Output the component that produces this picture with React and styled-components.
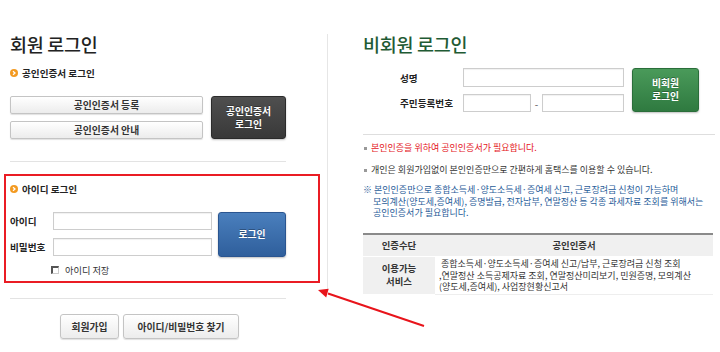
import React from 'react';
import styled, { createGlobalStyle } from 'styled-components';

const GlobalStyle = createGlobalStyle`
  html, body {
    margin: 0;
    padding: 0;
    background: #fff;
  }
  body {
    font-family: "Noto Sans CJK KR", "Noto Sans", sans-serif;
    color: #333;
  }
  * {
    box-sizing: border-box;
  }
`;

const Page = styled.div`
  position: relative;
  width: 720px;
  height: 352px;
  display: flex;
  overflow: hidden;
`;

const LeftCol = styled.div`
  width: 327px;
  padding: 33px 41px 0 10px;
`;

const VDivider = styled.div`
  width: 1px;
  height: 256px;
  margin-top: 34px;
  background: #e6e6e6;
`;

const RightCol = styled.div`
  flex: 1;
  padding: 33px 5px 0 35px;
`;

const PageTitle = styled.h1`
  margin: 0;
  height: 22px;
  font-size: 18.5px;
  line-height: 22px;
  font-weight: 500;
  letter-spacing: -0.3px;
  color: ${p => (p.$green ? '#1f5b34' : '#222')};
`;

const SectionHead = styled.div`
  display: flex;
  align-items: center;
  gap: 4px;
  height: 14px;
  margin-top: ${p => p.$mt || 0}px;
  font-size: 9.6px;
  font-weight: 700;
  color: #222;
  line-height: 14px;
`;

const Bullet = () => (
  <svg width="8" height="8" viewBox="0 0 8 8">
    <circle cx="4" cy="4" r="4" fill="#f39a21" />
    <path d="M3 2.2 L5 4 L3 5.8" stroke="#fff" strokeWidth="1.3" fill="none" />
  </svg>
);

const CertRow = styled.div`
  display: flex;
  gap: 8px;
  margin-top: 15px;
`;

const CertStack = styled.div`
  width: 193px;
  display: flex;
  flex-direction: column;
  gap: 7px;
  padding-top: 1px;
`;

const LightButton = styled.button`
  height: ${p => p.$h || 18}px;
  width: ${p => (p.$w ? `${p.$w}px` : '100%')};
  padding: 0;
  border: 1px solid #c4c4c4;
  border-radius: ${p => p.$r || 2}px;
  background: linear-gradient(#ffffff, #ececec);
  box-shadow: 0 1px 1px rgba(0, 0, 0, 0.12);
  font-family: inherit;
  font-size: 9.8px;
  font-weight: 700;
  color: #333;
  line-height: 12px;
`;

const SolidButton = styled.button`
  width: ${p => p.$w}px;
  height: ${p => p.$h}px;
  margin-top: ${p => p.$mt || 0}px;
  padding: 0;
  border: 1px solid ${p => p.$edge};
  border-radius: 3px;
  background: linear-gradient(${p => p.$top}, ${p => p.$bottom});
  box-shadow: 0 1px 2px rgba(0, 0, 0, 0.25);
  font-family: inherit;
  font-size: 9.8px;
  font-weight: 700;
  color: #fff;
  line-height: 13px;
  text-shadow: 0 -1px 0 rgba(0, 0, 0, 0.3);
`;

const HLine = styled.div`
  height: 1px;
  margin-top: ${p => p.$mt}px;
  background: ${p => p.$color || '#e3e3e3'};
`;

const IdBox = styled.div`
  margin: 12px 0 0 -6px;
  width: 316px;
  border: 2px solid #ea1c24;
  padding: 6px 0 4px 4px;
`;

const IdForm = styled.div`
  display: grid;
  grid-template-columns: 43px 159px 68px;
  grid-template-rows: 18px 18px;
  row-gap: 8px;
  margin-top: 16px;
  align-items: center;
`;

const FieldLabel = styled.label`
  font-size: 9.6px;
  font-weight: 700;
  color: #222;
  white-space: nowrap;
`;

const TextInput = styled.input`
  width: ${p => (p.$w ? `${p.$w}px` : '100%')};
  height: ${p => p.$h || 18}px;
  margin: 0;
  border: 1px solid #cdcdcd;
  box-shadow: inset 0 1px 1px rgba(0, 0, 0, 0.06);
  background: #fff;
`;

const BlueLogin = styled(SolidButton)`
  grid-column: 3;
  grid-row: 1 / span 2;
  margin-left: 6px;
  align-self: start;
`;

const SaveRow = styled.div`
  display: flex;
  align-items: center;
  gap: 6px;
  height: 14px;
  margin-top: 7px;
  padding-left: 41px;
  font-size: 9.2px;
  color: #333;
`;

const Check = styled.span`
  width: 8px;
  height: 8px;
  border-top: 2px solid #555;
  border-left: 2px solid #555;
  border-right: 1px solid #ccc;
  border-bottom: 1px solid #ccc;
  background: #fff;
`;

const BottomButtons = styled.div`
  display: flex;
  justify-content: center;
  gap: 4px;
  margin-top: 15px;
  padding-left: 3px;
`;

const GuestForm = styled.div`
  display: flex;
  gap: 8px;
  margin-top: 13px;
  padding-left: 37px;
`;

const GuestGrid = styled.div`
  display: grid;
  grid-template-columns: 63px 161px;
  grid-template-rows: 19px 18px;
  row-gap: 7px;
  align-items: center;
`;

const SsnRow = styled.div`
  display: flex;
  align-items: center;
  justify-content: space-between;
  font-size: 10px;
  color: #555;
`;

const NoteList = styled.ul`
  list-style: none;
  margin: 7px 0 0;
  padding: 0;
  font-size: 9px;
  line-height: 12px;
`;

const Note = styled.li`
  position: relative;
  padding-left: 8px;
  margin-bottom: ${p => p.$mb || 0}px;
  color: ${p => (p.$red ? '#e4151c' : '#333')};
  white-space: nowrap;

  &::before {
    content: '';
    position: absolute;
    left: 1px;
    top: 5px;
    width: 3px;
    height: 3px;
    background: #999;
  }
`;

const BlueNote = styled.p`
  margin: 8px 0 0;
  padding-left: 10px;
  text-indent: -10px;
  font-size: 9px;
  line-height: 11.5px;
  color: #1f5c99;
`;

const Table = styled.table`
  width: 350px;
  margin-top: 14px;
  border-collapse: collapse;
  border-top: 2px solid #8a8a8a;
  font-size: 9px;
`;

const HeadCell = styled.th`
  height: ${p => p.$h || 23}px;
  width: ${p => (p.$w ? `${p.$w}px` : 'auto')};
  padding: 0;
  background: #f0f0f0;
  border-bottom: 1px solid #fff;
  font-weight: 700;
  font-size: 9.4px;
  line-height: 13px;
  color: #333;
  text-align: center;
`;

const BodyCell = styled.td`
  padding: 1px 2px 1px 4px;
  line-height: 11.6px;
  color: #333;
  white-space: nowrap;
  border-bottom: 1px solid #eee;
`;

const Arrow = styled.svg`
  position: absolute;
  left: 0;
  top: 0;
  pointer-events: none;
`;

export default function App() {
  return (
    <>
      <GlobalStyle />
      <Page>
        <LeftCol>
          <PageTitle>회원 로그인</PageTitle>
          <SectionHead $mt={11}>
            <Bullet />
            공인인증서 로그인
          </SectionHead>
          <CertRow>
            <CertStack>
              <LightButton>공인인증서 등록</LightButton>
              <LightButton>공인인증서 안내</LightButton>
            </CertStack>
            <SolidButton $w={75} $h={43} $mt={1} $top="#4f4f4f" $bottom="#393939" $edge="#2b2b2b">
              공인인증서
              <br />
              로그인
            </SolidButton>
          </CertRow>
          <HLine $mt={22} />
          <IdBox>
            <SectionHead>
              <Bullet />
              아이디 로그인
            </SectionHead>
            <IdForm>
              <FieldLabel>아이디</FieldLabel>
              <TextInput />
              <BlueLogin $w={68} $h={45} $top="#4a7fbd" $bottom="#2f5f9c" $edge="#2a5590">
                로그인
              </BlueLogin>
              <FieldLabel>비밀번호</FieldLabel>
              <TextInput />
            </IdForm>
            <SaveRow>
              <Check />
              아이디 저장
            </SaveRow>
          </IdBox>
          <HLine $mt={15} />
          <BottomButtons>
            <LightButton $w={59} $h={25} $r={3}>회원가입</LightButton>
            <LightButton $w={116} $h={25} $r={3}>아이디/비밀번호 찾기</LightButton>
          </BottomButtons>
        </LeftCol>
        <VDivider />
        <RightCol>
          <PageTitle $green>비회원 로그인</PageTitle>
          <GuestForm>
            <GuestGrid>
              <FieldLabel>성명</FieldLabel>
              <TextInput $h={19} />
              <FieldLabel>주민등록번호</FieldLabel>
              <SsnRow>
                <TextInput $w={68} />
                -
                <TextInput $w={82} />
              </SsnRow>
            </GuestGrid>
            <SolidButton $w={67} $h={44} $top="#4a9a5a" $bottom="#2f7a40" $edge="#2a6e3a">
              비회원
              <br />
              로그인
            </SolidButton>
          </GuestForm>
          <HLine $mt={22} $color="#dedede" />
          <NoteList>
            <Note $red $mb={10}>본인인증을 위하여 공인인증서가 필요합니다.</Note>
            <Note>개인은 회원가입없이 본인인증만으로 간편하게 홈택스를 이용할 수 있습니다.</Note>
          </NoteList>
          <BlueNote>
            ※ 본인인증만으로 종합소득세·양도소득세·증여세 신고, 근로장려금 신청이 가능하며
            <br />
            모의계산(양도세,증여세), 증명발급, 전자납부, 연말정산 등 각종 과세자료 조회를 위해서는
            <br />
            공인인증서가 필요합니다.
          </BlueNote>
          <Table>
            <tbody>
              <tr>
                <HeadCell $w={72}>인증수단</HeadCell>
                <HeadCell>공인인증서</HeadCell>
              </tr>
              <tr>
                <HeadCell $h={37}>
                  이용가능
                  <br />
                  서비스
                </HeadCell>
                <BodyCell>
                  &nbsp;종합소득세·양도소득세·증여세 신고/납부, 근로장려금 신청 조회
                  <br />
                  ,연말정산 소득공제자료 조회, 연말정산미리보기, 민원증명, 모의계산
                  <br />
                  (양도세,증여세), 사업장현황신고서
                </BodyCell>
              </tr>
            </tbody>
          </Table>
        </RightCol>
        <Arrow width="720" height="352">
          <line x1="424" y1="326" x2="328" y2="293.5" stroke="#e8141b" strokeWidth="2" />
          <polygon points="318,290 328.7,288.8 326.2,297.4" fill="#e8141b" />
        </Arrow>
      </Page>
    </>
  );
}
